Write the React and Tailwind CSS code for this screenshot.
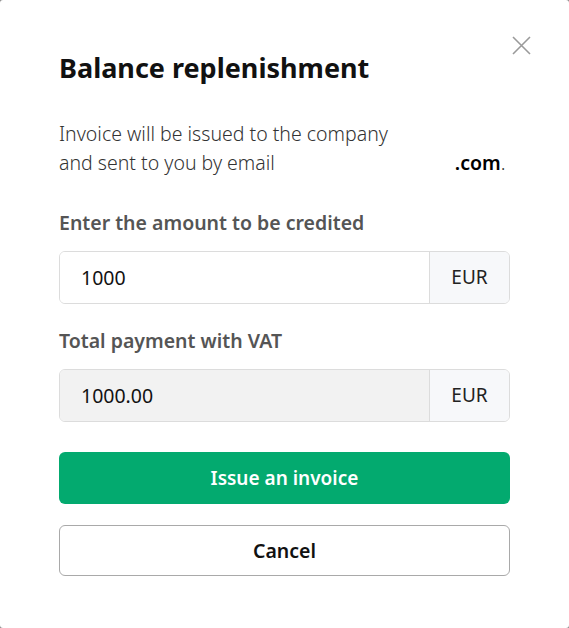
import React from 'react';

const font = { fontFamily: '"Noto Sans", "Open Sans", sans-serif' };

const AmountField = ({ value, readOnly }) => (
  <div className="flex h-[53px] w-full overflow-hidden rounded-md border border-[#dcdcdc]">
    <input
      readOnly
      value={value}
      className={`min-w-0 flex-1 px-[21px] text-[19.5px] text-[#111] outline-none ${readOnly ? 'bg-[#f2f2f2]' : 'bg-white'}`}
    />
    <div className="flex w-[80px] items-center justify-center border-l border-[#dcdcdc] bg-[#f7f8fa] text-[19px] text-[#222]">
      EUR
    </div>
  </div>
);

const App = () => {
  return (
    <div className="min-h-screen bg-[#8a8a8a]" style={font}>
      <div className="relative h-[628px] w-[569px] rounded-[3px] bg-white px-[59px] pt-[50px]">
        <button className="absolute right-[37px] top-[35px] text-[#9a9a9a]" aria-label="Close">
          <svg width="21" height="21" viewBox="0 0 21 21" fill="none" stroke="currentColor" strokeWidth="1.6">
            <path d="M2 2L19 19M19 2L2 19" />
          </svg>
        </button>

        <h2 className="text-[27px] font-bold leading-[36px] text-[#111]">Balance replenishment</h2>

        <p className="mt-[33px] text-[19.5px] font-light leading-[29px] text-[#333]">
          Invoice will be issued to the company
          <br />
          and sent to you by email
          <span className="inline-block w-[180px]" />
          <span className="font-semibold text-black">.com</span>.
        </p>

        <label className="mt-[33px] block text-[19.5px] font-semibold leading-[26px] text-[#555]">
          Enter the amount to be credited
        </label>
        <div className="mt-[15px]">
          <AmountField value="1000" />
        </div>

        <label className="mt-[24px] block text-[19.5px] font-semibold leading-[26px] text-[#555]">
          Total payment with VAT
        </label>
        <div className="mt-[15px]">
          <AmountField value="1000.00" readOnly />
        </div>

        <button className="mt-[30px] flex h-[52px] w-full items-center justify-center rounded-md bg-[#03aa6f] text-[19px] font-semibold text-white">
          Issue an invoice
        </button>
        <button className="mt-[21px] flex h-[51px] w-full items-center justify-center rounded-md border border-[#a9a9a9] bg-white text-[19.5px] font-semibold text-[#111]">
          Cancel
        </button>
      </div>
    </div>
  );
};

export default App;
